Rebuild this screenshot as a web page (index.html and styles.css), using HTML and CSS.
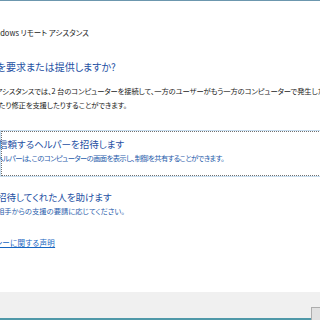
FILE: index.html
```html
<!DOCTYPE html>
<html lang="ja">
<head>
    <meta charset="UTF-8">
    <title>Windows リモート アシスタンス</title>
    <link rel="stylesheet" href="styles.css">
</head>
<body>
    <div class="window">
        <div class="top-line"></div>
        <div class="content">
            <div class="title">Windows リモート アシスタンス</div>
            <h1 class="main">ヘルプを要求または提供しますか?</h1>
            <div class="intro">
                <div class="intro-line first">Windows リモート アシスタンスでは、2 台のコンピューターを接続して、一方のユーザーがもう一方のコンピューターで発生した問題のトラブルシューティングを行</div>
                <div class="intro-line second">を行ったり修正を支援したりすることができます。</div>
            </div>
            <div class="option focused">
                <div class="option-inner">
                    <div class="option-title first">信頼するヘルパーを招待します</div>
                    <div class="option-desc first">ヘルパーは、このコンピューターの画面を表示し、制御を共有することができます。</div>
                </div>
            </div>
            <div class="option second">
                <div class="option-inner">
                    <div class="option-title">招待してくれた人を助けます</div>
                    <div class="option-desc">相手からの支援の要請に応じてください。</div>
                </div>
            </div>
            <a class="privacy" href="#">プライバシーに関する声明</a>
        </div>
        <div class="footer">
            <button class="btn">キャンセル</button>
        </div>
    </div>
</body>
</html>
```

FILE: styles.css
```css
body {
    margin: 0;
    width: 320px;
    height: 320px;
    overflow: hidden;
    background: #fff;
    font-family: "Noto Sans CJK JP", "Noto Sans", sans-serif;
    font-feature-settings: "palt";
    color: #1a1a1a;
}
.window {
    display: flex;
    flex-direction: column;
    height: 320px;
    white-space: nowrap;
}
.top-line {
    height: 1px;
    background: #6c97ae;
}
.content {
    flex: 1;
    display: flex;
    flex-direction: column;
    align-items: flex-start;
}
.title {
    margin: 26px 0 0 -13px;
    font-size: 7.5px;
    line-height: 12px;
}
.main {
    margin: 21px 0 0 -32px;
    font-size: 10px;
    line-height: 14px;
    font-weight: normal;
    color: #1d4fa3;
}
.intro {
    margin-top: 10px;
    font-size: 7.3px;
    line-height: 14px;
    letter-spacing: -0.1px;
}
.intro-line.first {
    margin-left: -63px;
}
.intro-line.second {
    margin-left: -21px;
}
.option {
    align-self: stretch;
    margin-top: 18px;
    margin-right: -10px;
    border: 1px solid transparent;
}
.option.focused {
    border-color: #c7ddef;
}
.option.second {
    margin-top: 6px;
}
.option-inner {
    border: 1px dotted transparent;
    padding: 5px 0 11px;
}
.focused .option-inner {
    border-color: #707070;
}
.option-title {
    margin-left: -5px;
    font-size: 9.5px;
    line-height: 14px;
    color: #1d4fa3;
}
.option-desc {
    margin: 1px 0 0 -5px;
    font-size: 7.3px;
    line-height: 12px;
    color: #1f5cab;
}
.option-title.first {
    margin-left: -4px;
}
.option-desc.first {
    margin-left: -6px;
    letter-spacing: -0.6px;
}
.privacy {
    margin: 7px 0 0 -33px;
    font-size: 7.5px;
    line-height: 12px;
    letter-spacing: 0.3px;
    color: #1665c1;
}
.footer {
    height: 28px;
    background: #f0f0f0;
    border-bottom: 2px solid #4f98a8;
    padding-left: 311px;
    padding-top: 7px;
    box-sizing: border-box;
}
.btn {
    height: 15px;
    padding: 0 0 0 20px;
    background: #e1e1e1;
    border: 1px solid #adadad;
    font-family: inherit;
    font-size: 8px;
}
```
